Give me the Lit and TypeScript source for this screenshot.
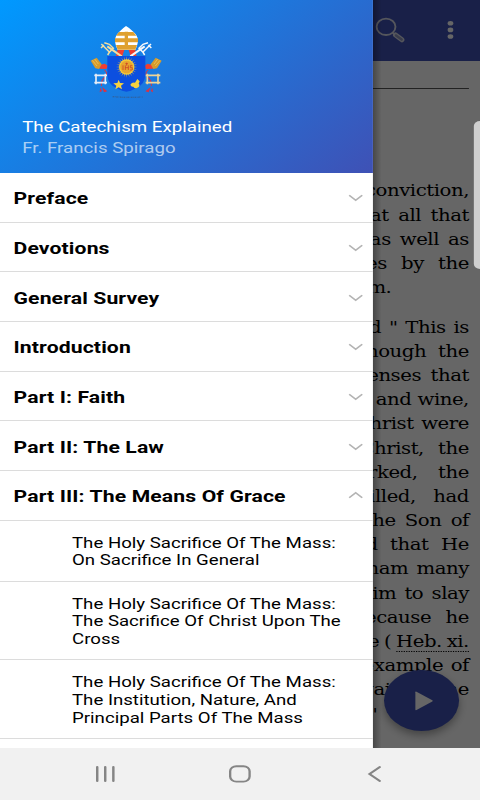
import { LitElement, html, css, svg } from "lit";
import { customElement, property } from "lit/decorators.js";

interface Line {
  text: string;
  gap: number;
  end?: number;
  ref?: string;
}

const SECTIONS = [
  "Preface",
  "Devotions",
  "General Survey",
  "Introduction",
  "Part I: Faith",
  "Part II: The Law",
  "Part III: The Means Of Grace",
];

const CHAPTERS = [
  ["The Holy Sacrifice Of The Mass:", "On Sacrifice In General"],
  ["The Holy Sacrifice Of The Mass:", "The Sacrifice Of Christ Upon The", "Cross"],
  ["The Holy Sacrifice Of The Mass:", "The Institution, Nature, And", "Principal Parts Of The Mass"],
];

// gap is the extra word spacing of a justified line
const PARAGRAPHS: Line[][] = [
  [
    { text: "conviction,", gap: 0 },
    { text: "at all that", gap: 3 },
    { text: "as well as", gap: 2.6 },
    { text: "es by the", gap: 6.8 },
    { text: "m.", gap: 0, end: 63 },
  ],
  [
    { text: 'd " This is', gap: 1.6 },
    { text: "hough the", gap: 5 },
    { text: "senses that", gap: 3 },
    { text: "and wine,", gap: 0.3 },
    { text: "hrist were", gap: 1.5 },
    { text: "Christ, the", gap: 6.8 },
    { text: "rked, the", gap: 12 },
    { text: "illed, had", gap: 9.5 },
    { text: "the Son of", gap: 2.8 },
    { text: "d that He", gap: 5.5 },
    { text: "ham many", gap: 2 },
    { text: "im to slay", gap: 2 },
    { text: "because he", gap: 7 },
    { text: "e (", gap: -0.8, ref: "Heb. xi." },
    { text: "example of", gap: 1.5 },
    { text: "against the", gap: 10 },
    { text: '"', gap: 0, end: 74.5 },
  ],
];

@customElement("coat-of-arms")
export class CoatOfArms extends LitElement {
  static styles = css`
    :host {
      display: block;
    }
    svg {
      display: block;
      width: 100%;
      height: 100%;
    }
  `;

  render() {
    const rays = Array.from({ length: 24 }, (_, i) => {
      return svg`<path d="M137 155l3-31l3 31z" fill="#f3c73a" transform="rotate(${i * 15} 140 156)" />`;
    });
    return html`
      <svg viewBox="0 0 285 285" preserveAspectRatio="none">
        <g fill="#ef3e32">
          <path d="M114 100l20 2-8 24h-19zM165 100l-20 2 8 24h17z" />
          <path d="M56 151l18-5 10 6-5 10-20-1zM221 151l-18-5-10 6 5 10 20-1z" />
        </g>
        <g fill="none" stroke="#d93344" stroke-width="3">
          <path d="M74 165q12 12 1 21q-12 10-11 27M204 165q-12 12-1 21q12 10 11 27" />
        </g>
        <path d="M61 218l5 10-7 4zM66 216l16 13-10 3zM217 218l-5 10 7 4zM212 216l-16 13 10 3z" fill="#d93344" />
        <path d="M32 137l18-9 15 20-8 14-11-2zM245 137l-18-9-15 20 8 14 11-2z" fill="#d49b2c" />
        <path d="M37 136l14 17M44 132l11 15M240 136l-14 17M233 132l-11 15" stroke="#f3cf67" stroke-width="2" />
        <g fill="none" stroke="#e8edf7" stroke-width="5">
          <path d="M48 176v32M76 176v32M43 181h38M43 203h38" />
        </g>
        <g fill="none" stroke="#efd596" stroke-width="5">
          <path d="M202 176v32M234 176v32M197 181h44M197 203h44" />
        </g>
        <g fill="none" stroke="#f3deA0" stroke-width="6">
          <path d="M125 124L82 94" />
          <path d="M64 87l24 24M73 83l15 5 12 12-12 12-5 8M63 99l9-9" stroke-width="4.5" />
        </g>
        <g fill="none" stroke="#f7f8fa" stroke-width="6">
          <path d="M151 124l43-30" />
          <path d="M213 87l-24 24M204 83l-15 5-12 12 12 12 5 8M214 99l-9-9" stroke-width="4.5" />
        </g>
        <path d="M105 76q0-13 13-26 11-11 20-17 11 6 22 17 14 13 14 26 0 11-8 29H113q-8-18-8-29z" fill="#fff" />
        <path
          d="M117 51h43l9 11H108zM105 70h69v12H105zM108 90h63l-5 14h-53zM134 50h10v52h-10z"
          fill="#dfa02f"
        />
        <path d="M82 123h114v55q0 32-31 43-12 7-26 9-12-2-26-9-31-11-31-43z" fill="#0c4fe0" />
        ${rays}
        <circle cx="140" cy="156" r="23" fill="#f3c73a" />
        <circle cx="140" cy="156" r="19" fill="#e8a52e" />
        <path
          d="M129 151v14M136 151v14M136 158h9M145 151v14M157 152h-6v6h6v7h-7M140 143v9M136 146h8"
          fill="none"
          stroke="#c93b25"
          stroke-width="2.2"
        />
        <path d="M116 194l4 10 12 1-9 7 3 11-10-6-10 6 3-11-9-7 12-1z" fill="#f6d13f" />
        <path d="M151 209q5-8 14-6l7-11 7 7-3 7q5 5-1 11-10 6-15-2-6 2-9-6z" fill="#f6d13f" />
        <path d="M98 245q42 3 90 1" fill="none" stroke="#345d91" stroke-width="3" stroke-dasharray="5 2 2 2" />
      </svg>
    `;
  }
}

@customElement("reader-page")
export class ReaderPage extends LitElement {
  static styles = css`
    :host {
      display: flex;
      flex-direction: column;
      height: 748px;
      overflow: hidden;
      background: #fff;
      color: #000;
    }
    .bar {
      flex: none;
      display: flex;
      justify-content: flex-end;
      align-items: center;
      gap: 33.5px;
      height: 60.5px;
      padding-right: 20px;
      background: #3f51b5;
    }
    .search {
      width: 24px;
      height: 26px;
    }
    .more {
      width: 8px;
      height: 22px;
    }
    .rule {
      flex: none;
      margin: 27.5px 9px 0;
      border-top: 1px solid #555;
    }
    .text {
      padding: 90.4px 9px 0 0;
      font: 16px/24.17px "DejaVu Serif", serif;
      letter-spacing: -0.38px;
    }
    p {
      margin: 0 0 15.5px;
    }
    .line {
      display: block;
      text-align: right;
      white-space: nowrap;
    }
    .ref {
      border-bottom: 1px dotted #000;
    }
  `;

  renderLine(line: Line) {
    const style = `word-spacing: ${line.gap}px; padding-right: ${line.end ?? 0}px`;
    return html`<span class="line" style=${style}
      >${line.text}${line.ref ? html` <span class="ref">${line.ref}</span>` : ""}</span
    >`;
  }

  render() {
    return html`
      <div class="bar">
        <svg class="search" viewBox="0 0 30 26" preserveAspectRatio="none" fill="none">
          <ellipse cx="10.8" cy="9.8" rx="9.6" ry="8.2" stroke="#d5d8e6" stroke-width="1.9" />
          <path d="M17.5 16l2.2 1.5" stroke="#d5d8e6" stroke-width="2" />
          <path d="M20.5 18l6.5 4.8" stroke="#d5d8e6" stroke-width="5" stroke-linecap="round" />
          <path d="M21 18.4l5.7 4.2" stroke="#8f97bd" stroke-width="2.5" stroke-linecap="round" />
        </svg>
        <svg class="more" viewBox="0 0 8 22" fill="#fff">
          <circle cx="4" cy="4.3" r="2.3" />
          <circle cx="4" cy="10.9" r="2.3" />
          <circle cx="4" cy="17.5" r="2.3" />
        </svg>
      </div>
      <div class="rule"></div>
      <div class="text">
        ${PARAGRAPHS.map((lines) => html`<p>${lines.map((line) => this.renderLine(line))}</p>`)}
      </div>
    `;
  }
}

@customElement("menu-section")
export class MenuSection extends LitElement {
  static styles = css`
    :host {
      display: flex;
      align-items: center;
      justify-content: space-between;
      box-sizing: border-box;
      height: 49.67px;
      padding: 2px 8.5px 0 11px;
      border-bottom: 1px solid #dcdcdc;
      font-weight: 700;
      font-size: 17.2px;
      letter-spacing: 0.1px;
    }
    svg {
      width: 12px;
      height: 8px;
      fill: none;
      stroke: #b4b4b4;
      stroke-width: 1.5;
    }
    :host([open]) svg {
      transform: translateY(-1px) scaleY(-1);
    }
  `;

  @property() label = "";
  @property({ type: Boolean, reflect: true }) open = false;

  render() {
    return html`
      <span>${this.label}</span>
      <svg viewBox="0 0 12 8"><path d="M0.7 1.3L6 6.3l5.3-5" /></svg>
    `;
  }
}

@customElement("app-root")
export class AppRoot extends LitElement {
  // laid out 390 wide and stretched to the full width of the window
  static styles = css`
    :host {
      display: block;
      width: 480px;
      height: 800px;
      overflow: hidden;
    }
    .screen {
      position: relative;
      width: 390px;
      height: 800px;
      transform: scaleX(1.23077);
      transform-origin: 0 0;
      font-family: Roboto, sans-serif;
      color: #000;
    }
    .fab {
      position: absolute;
      right: 17.5px;
      top: 670px;
      width: 61px;
      height: 61px;
      display: flex;
      align-items: center;
      justify-content: center;
      border-radius: 50%;
      background: #3f51b5;
      box-shadow: 0 4px 8px rgba(0, 0, 0, 0.35);
    }
    .fab svg {
      width: 15px;
      height: 20px;
      margin-left: 4px;
    }
    .scrim {
      position: absolute;
      inset: 0 0 52px;
      background: rgba(0, 0, 0, 0.6);
    }
    .thumb {
      position: absolute;
      right: 0;
      top: 121px;
      width: 5px;
      height: 148px;
      border-radius: 5px 0 0 5px;
      background: #cfcfcf;
    }
    .drawer {
      position: absolute;
      inset: 0 auto 52px 0;
      width: 303px;
      overflow: hidden;
      background: #fff;
    }
    .edge {
      position: absolute;
      left: 303px;
      top: 0;
      width: 7px;
      height: 748px;
      background: linear-gradient(90deg, rgba(0, 0, 0, 0.3), transparent);
    }
    .header {
      box-sizing: border-box;
      height: 173px;
      padding: 15px 18px 0;
      background: linear-gradient(135deg, #0099ff, #3f51b5);
      font-size: 15.2px;
      line-height: 20.5px;
      color: #fff;
    }
    coat-of-arms {
      width: 77.2px;
      height: 95px;
      margin: 0 0 7px 47px;
    }
    .author {
      color: rgba(255, 255, 255, 0.65);
    }
    .chapter {
      padding: 14px 0 10.5px 58.5px;
      border-bottom: 1px solid #dcdcdc;
      font-size: 15.15px;
      line-height: 17.75px;
      white-space: nowrap;
    }
    .nav {
      position: absolute;
      inset: 748px 0 0;
      display: grid;
      grid-template-columns: repeat(3, 1fr);
      justify-items: center;
      align-items: center;
      padding: 0 31px;
      background: #f1f1f1;
    }
    .nav svg {
      width: 22px;
      height: 20px;
      fill: none;
      stroke: #858585;
      stroke-width: 1.9;
      stroke-linecap: round;
    }
  `;

  render() {
    return html`
      <div class="screen">
        <reader-page></reader-page>
        <div class="fab">
          <svg viewBox="0 0 16 21" preserveAspectRatio="none" fill="#fff">
            <path d="M0.5 1.2q0-1 1-.4l13.7 9q.8.6 0 1.2l-13.7 9q-1 .5-1-.5z" />
          </svg>
        </div>
        <div class="scrim"></div>
        <div class="thumb"></div>
        <div class="edge"></div>
        <div class="drawer">
          <div class="header">
            <coat-of-arms></coat-of-arms>
            <div>The Catechism Explained</div>
            <div class="author">Fr. Francis Spirago</div>
          </div>
          ${SECTIONS.map(
            (label, i) => html`
              <menu-section .label=${label} ?open=${i === SECTIONS.length - 1}></menu-section>
            `
          )}
          ${CHAPTERS.map(
            (lines) => html`
              <div class="chapter">${lines.map((line) => html`<div>${line}</div>`)}</div>
            `
          )}
        </div>
        <div class="nav">
          <svg viewBox="0 0 22 20"><path d="M4 3v14M10.5 3v14M17.1 3v14" stroke-width="2" /></svg>
          <svg viewBox="0 0 22 20"><rect x="3" y="2.2" width="15.8" height="15.4" rx="5" /></svg>
          <svg viewBox="0 0 22 20"><path d="M15.6 3l-8.4 7 8.4 7" /></svg>
        </div>
      </div>
    `;
  }
}
